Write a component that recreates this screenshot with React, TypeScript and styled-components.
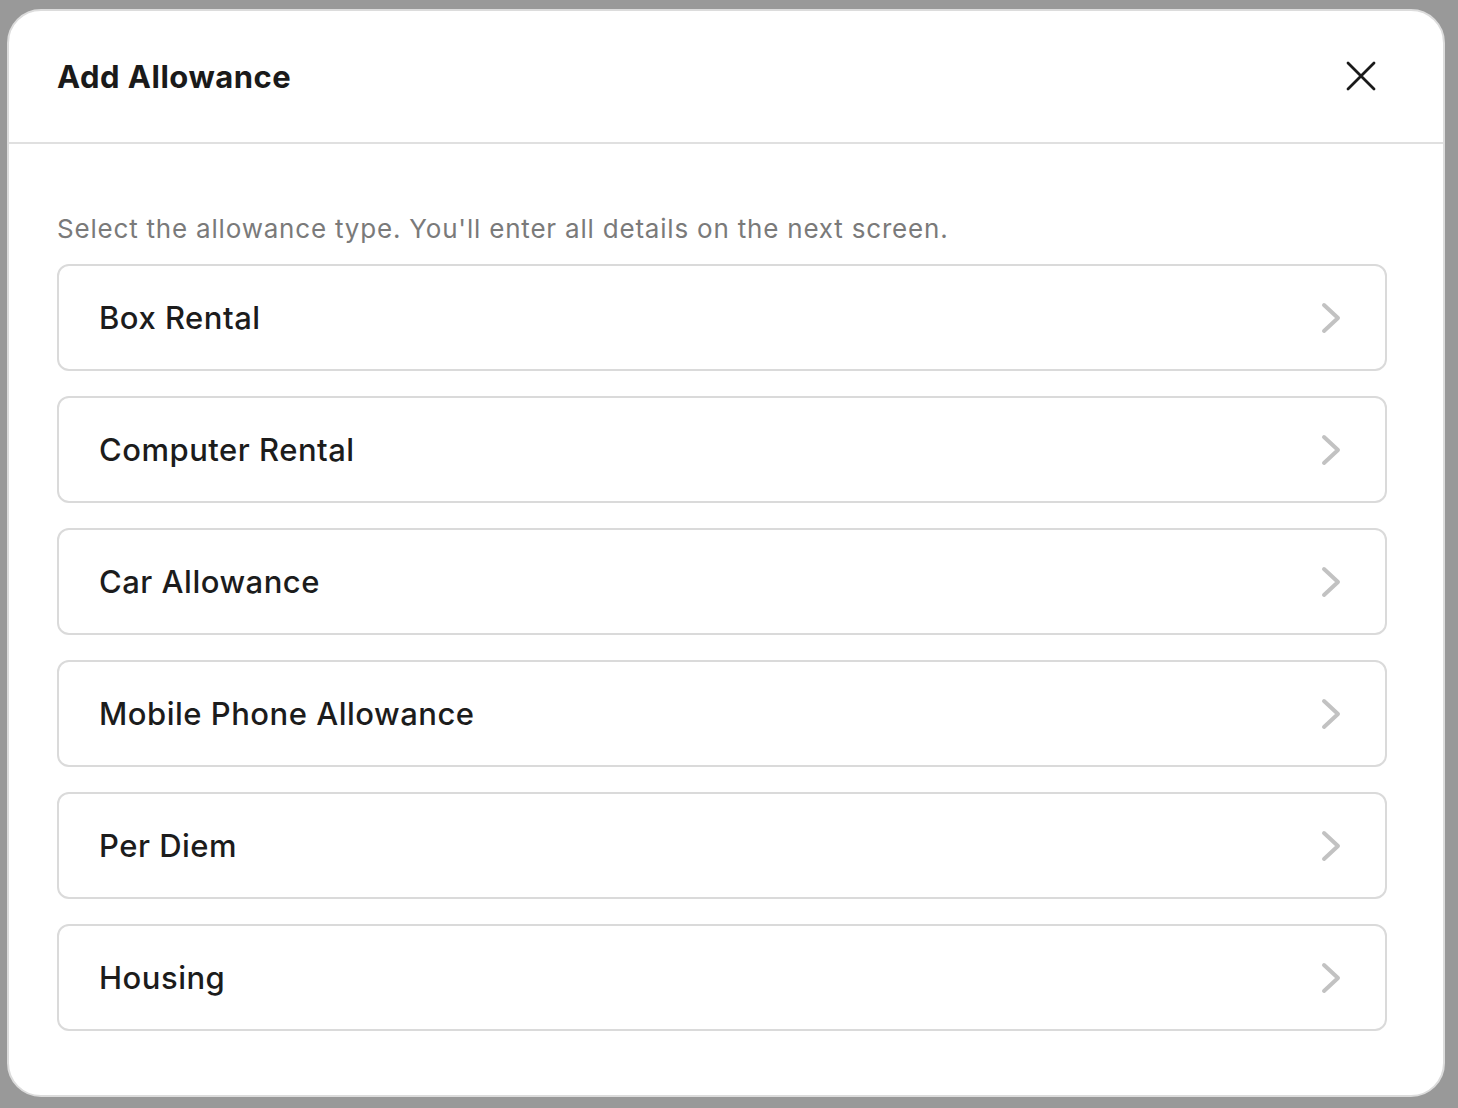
import React from "react";
import styled, { createGlobalStyle } from "styled-components";

const GlobalStyle = createGlobalStyle`
  * { box-sizing: border-box; }
  html, body { margin: 0; padding: 0; }
  body {
    background: #999999;
    font-family: "Inter", "Noto Sans", "Liberation Sans", sans-serif;
    -webkit-font-smoothing: antialiased;
  }
`;

const Backdrop = styled.div`
  position: fixed;
  inset: 0;
  background: #999999;
  display: flex;
  align-items: flex-start;
  justify-content: flex-start;
  padding: 9px 13px 11px 7px;
`;

const Modal = styled.div`
  width: 100%;
  height: 100%;
  background: #ffffff;
  border: 2px solid #dcdcdc;
  border-radius: 34px;
  display: flex;
  flex-direction: column;
  overflow: hidden;
`;

const Header = styled.header`
  height: 133px;
  flex: 0 0 auto;
  display: flex;
  align-items: center;
  justify-content: space-between;
  padding: 0 66px 0 48px;
  border-bottom: 2px solid #e0e0e0;
`;

const Title = styled.h2`
  margin: 0;
  font-size: 31px;
  font-weight: 700;
  color: #1a1a1a;
  letter-spacing: 0.5px;
  line-height: 1;
`;

const CloseButton = styled.button`
  width: 32px;
  height: 32px;
  padding: 0;
  border: none;
  background: transparent;
  display: flex;
  align-items: center;
  justify-content: center;
  cursor: pointer;
  margin-bottom: 2px;
`;

const Body = styled.div`
  flex: 1 1 auto;
  display: flex;
  flex-direction: column;
  padding: 69px 56px 0 48px;
`;

const Subtitle = styled.p`
  margin: 0 0 19px;
  font-size: 26px;
  line-height: 32px;
  color: #7a7a7a;
  font-weight: 400;
  letter-spacing: 0.8px;
`;

const List = styled.ul`
  list-style: none;
  margin: 0;
  padding: 0;
  display: flex;
  flex-direction: column;
  gap: 25px;
`;

const Item = styled.li`
  height: 107px;
  border: 2px solid #dadada;
  border-radius: 12px;
  display: flex;
  align-items: center;
  justify-content: space-between;
  padding: 0 44px 0 40px;
  cursor: pointer;
`;

const ItemLabel = styled.span`
  font-size: 31px;
  font-weight: 500;
  color: #1c1c1c;
  letter-spacing: 0.5px;
  line-height: 1;
`;

const CloseIcon = () => (
  <svg width="30" height="30" viewBox="0 0 30 30" fill="none">
    <path d="M2 2 L28 28 M28 2 L2 28" stroke="#1a1a1a" strokeWidth="2.8" strokeLinecap="round" />
  </svg>
);

const Chevron = () => (
  <svg width="20" height="32" viewBox="0 0 20 32" fill="none">
    <polyline points="3,3 17,16 3,29" stroke="#c2c2c2" strokeWidth="4" strokeLinecap="round" strokeLinejoin="round" />
  </svg>
);

const items = [
  "Box Rental",
  "Computer Rental",
  "Car Allowance",
  "Mobile Phone Allowance",
  "Per Diem",
  "Housing",
];

export default function App() {
  return (
    <>
      <GlobalStyle />
      <Backdrop>
        <Modal role="dialog" aria-label="Add Allowance">
          <Header>
            <Title>Add Allowance</Title>
            <CloseButton aria-label="Close">
              <CloseIcon />
            </CloseButton>
          </Header>
          <Body>
            <Subtitle>Select the allowance type. You'll enter all details on the next screen.</Subtitle>
            <List>
              {items.map((label) => (
                <Item key={label}>
                  <ItemLabel>{label}</ItemLabel>
                  <Chevron />
                </Item>
              ))}
            </List>
          </Body>
        </Modal>
      </Backdrop>
    </>
  );
}
